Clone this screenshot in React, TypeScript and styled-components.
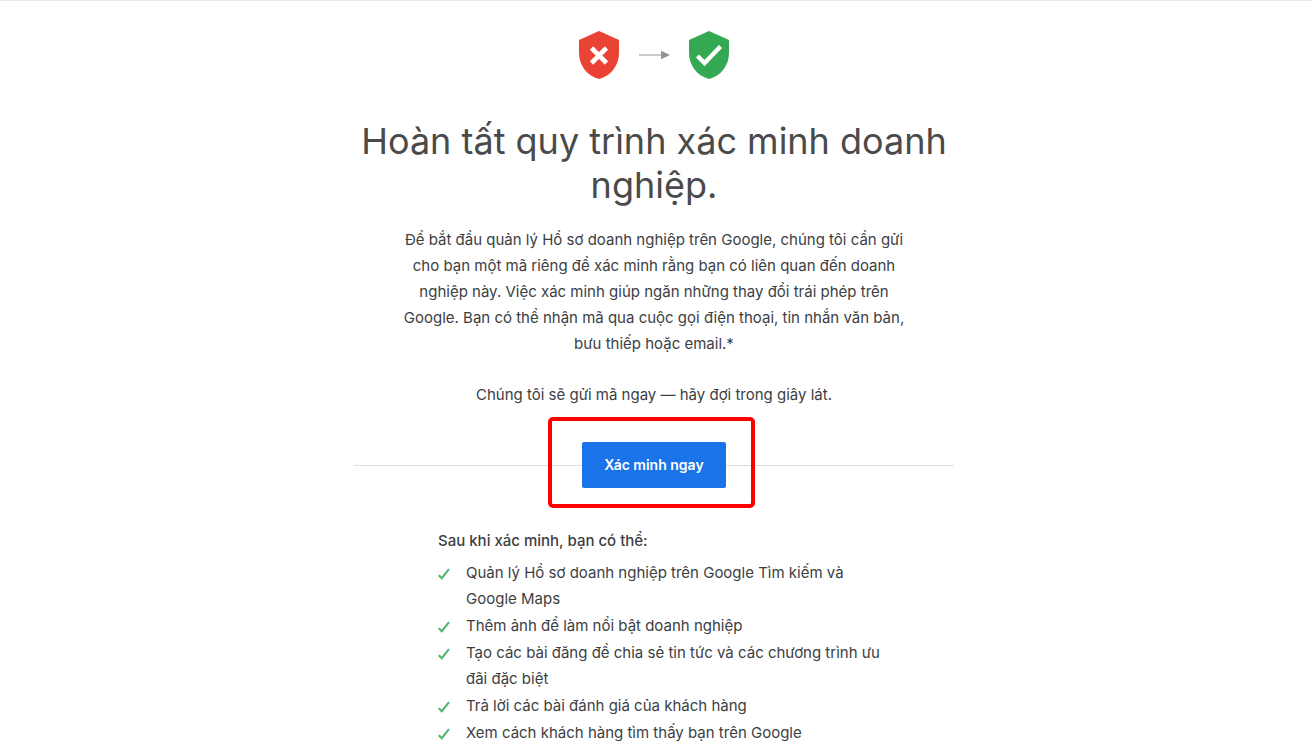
import React from "react";
import styled, { createGlobalStyle } from "styled-components";

const GlobalStyle = createGlobalStyle`
  body {
    margin: 0;
    background: #fff;
    color: #3c4043;
    font-family: "Google Sans", Inter, "Liberation Sans", sans-serif;
    font-size: 15px;
    line-height: 26px;
  }
`;

const Page = styled.main`
  box-sizing: border-box;
  border-top: 1px solid #e8e8e8;
  padding: 30px 5px 0 0;
`;

const Content = styled.div`
  max-width: 600px;
  margin: 0 auto;
  text-align: center;
`;

const Shields = styled.div`
  display: flex;
  justify-content: center;
  align-items: center;
  gap: 20px;

  svg {
    display: block;
    overflow: visible;
  }
`;

const Title = styled.h1`
  margin: 40px 0 0;
  color: #4a4a4a;
  font-size: 36px;
  font-weight: 400;
  line-height: 44px;
`;

const Paragraph = styled.p<{ $top: number }>`
  margin: ${(p) => p.$top}px 0 0;
`;

const ActionRow = styled.div`
  display: flex;
  align-items: center;
  margin-top: 34px;

  &::before,
  &::after {
    content: "";
    flex: 1;
    height: 1px;
    background: #dadce0;
  }
`;

const Highlight = styled.div`
  position: relative;

  &::after {
    content: "";
    position: absolute;
    inset: -25px -29px -20px -34px;
    border: 4px solid #fe0000;
    border-radius: 5px;
    pointer-events: none;
  }
`;

const VerifyButton = styled.button`
  display: block;
  width: 144px;
  height: 46px;
  padding: 0;
  border: 0;
  border-radius: 2px;
  background: #1a73e8;
  color: #fff;
  font: inherit;
  font-size: 14px;
  font-weight: 600;
  cursor: pointer;
`;

const Benefits = styled.section`
  padding: 0 48px 0 84px;
  text-align: left;
`;

const BenefitsTitle = styled.h2`
  margin: 40px 0 6px;
  font-size: 15px;
  font-weight: 500;
  line-height: 26px;
`;

const BenefitList = styled.ul`
  display: grid;
  gap: 1px;
  margin: 0;
  padding: 0;
  list-style: none;
`;

const Benefit = styled.li`
  display: flex;
  gap: 16px;

  svg {
    flex: none;
    margin-top: 8px;
  }
`;

const SHIELD = "M20 0L40 9V22C40 34.500 31.500 45.300 20 48C8.500 45.300 0 34.500 0 22V9Z";

const benefits: React.ReactNode[] = [
  <>Quản lý Hồ sơ doanh nghiệp trên Google Tìm kiếm và<br />Google Maps</>,
  "Thêm ảnh để làm nổi bật doanh nghiệp",
  <>Tạo các bài đăng để chia sẻ tin tức và các chương trình ưu<br />đãi đặc biệt</>,
  "Trả lời các bài đánh giá của khách hàng",
  "Xem cách khách hàng tìm thấy bạn trên Google",
];

export default function App() {
  return (
    <>
      <GlobalStyle />
      <Page>
        <Content>
          <Shields aria-hidden="true">
            <svg width="40" height="48" viewBox="0 0 40 48">
              <path d={SHIELD} fill="#ea4335" />
              <path d="M12.500 17L27.500 32M27.500 17L12.500 32" stroke="#fff" strokeWidth="4.600" />
            </svg>
            <svg width="30" height="10" viewBox="0 0 30 10">
              <path d="M0 5H23" stroke="#b8b8b8" strokeWidth="1.500" />
              <path d="M22 0.800L31 5L22 9.200Z" fill="#929292" />
            </svg>
            <svg width="40" height="48" viewBox="0 0 40 48">
              <path d={SHIELD} fill="#34a853" />
              <path d="M8.500 25L15.500 32L31.500 15.500" fill="none" stroke="#fff" strokeWidth="4.400" />
            </svg>
          </Shields>
          <Title>Hoàn tất quy trình xác minh doanh<br />nghiệp.</Title>
          <Paragraph $top={20}>
            Để bắt đầu quản lý Hồ sơ doanh nghiệp trên Google, chúng tôi cần gửi<br />
            cho bạn một mã riêng để xác minh rằng bạn có liên quan đến doanh<br />
            nghiệp này. Việc xác minh giúp ngăn những thay đổi trái phép trên<br />
            Google. Bạn có thể nhận mã qua cuộc gọi điện thoại, tin nhắn văn bản,<br />
            bưu thiếp hoặc email.*
          </Paragraph>
          <Paragraph $top={25}>Chúng tôi sẽ gửi mã ngay — hãy đợi trong giây lát.</Paragraph>
          <ActionRow>
            <Highlight>
              <VerifyButton type="button">Xác minh ngay</VerifyButton>
            </Highlight>
          </ActionRow>
          <Benefits>
            <BenefitsTitle>Sau khi xác minh, bạn có thể:</BenefitsTitle>
            <BenefitList>
              {benefits.map((text, i) => (
                <Benefit key={i}>
                  <svg width="12" height="12" viewBox="0 0 12 12" aria-hidden="true">
                    <path d="M0.800 7.200L3.800 10.200L11 1.200" fill="none" stroke="#4db56a" strokeWidth="2" />
                  </svg>
                  <span>{text}</span>
                </Benefit>
              ))}
            </BenefitList>
          </Benefits>
        </Content>
      </Page>
    </>
  );
}
